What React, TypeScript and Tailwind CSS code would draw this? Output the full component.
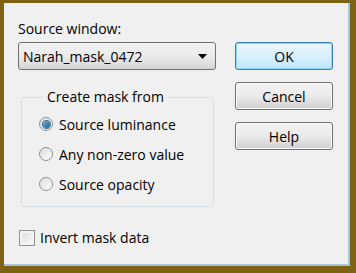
import React from 'react';

const font = { fontFamily: '"Open Sans", "Noto Sans", Arial, sans-serif' };

function Radio({ checked, label }: { checked?: boolean; label: string }) {
  return (
    <div className="flex items-center gap-[6px] h-[30px]">
      <div className="w-[14px] h-[14px] rounded-full border border-[#8e8f8f] bg-gradient-to-br from-[#dcdcdc] to-[#ffffff] flex items-center justify-center">
        {checked && <div className="w-[7px] h-[7px] rounded-full bg-gradient-to-br from-[#6fb3d9] to-[#1c5b8b] ring-1 ring-[#3a6f98]" />}
      </div>
      <span>{label}</span>
    </div>
  );
}

function Btn({ children, primary }: { children: React.ReactNode; primary?: boolean }) {
  return (
    <button
      className={
        primary
          ? 'h-[28px] w-[98px] rounded-[3px] border border-[#3c7fb1] bg-gradient-to-b from-[#eaf6fd] via-[#d9f0fc] to-[#bee6fd] shadow-[inset_0_0_0_1px_#8fd3f5] text-[14px]'
          : 'h-[28px] w-[98px] rounded-[3px] border border-[#707070] bg-gradient-to-b from-[#f2f2f2] via-[#ebebeb] to-[#cfcfcf] shadow-[inset_0_0_0_1px_#fcfcfc] text-[14px]'
      }
    >
      {children}
    </button>
  );
}

export default function App() {
  return (
    <div className="w-[356px] h-[273px] bg-[#7e6314] pt-[3px] pl-[4px] pr-[6px] pb-[7px]" style={font}>
      <div className="h-full w-full bg-[#f0f0f0] border-r-2 border-b-2 border-[#a7c3d8] flex text-[14px] text-black">
        <div className="w-[212px] pl-[14px] pt-[16px] flex flex-col">
          <div className="h-[23px] leading-[20px]">Source window:</div>
          <div className="h-[28px] rounded-[3px] border border-[#707070] bg-gradient-to-b from-[#f2f2f2] via-[#ebebeb] to-[#d5d5d5] flex items-center justify-between pl-[4px] pr-[8px]">
            <span>Narah_mask_0472</span>
            <svg width="9" height="5" viewBox="0 0 9 5"><path d="M0 0h9L4.5 5z" fill="#000" /></svg>
          </div>
          <fieldset className="mt-[18px] ml-[3px] mr-[2px] h-[119px] border border-[#d5dfe5] rounded-[3px] pl-[17px] pt-[3px]">
            <legend className="ml-[5px] px-[3px] leading-[18px]">Create mask from</legend>
            <Radio checked label="Source luminance" />
            <Radio label="Any non-zero value" />
            <Radio label="Source opacity" />
          </fieldset>
          <div className="mt-[20px] ml-[1px] flex items-center gap-[5px]">
            <div className="w-[16px] h-[16px] border border-[#8e8f8f] bg-gradient-to-br from-[#dcdcdc] to-[#fafafa] shadow-[inset_0_0_0_2px_#f4f4f4]" />
            <span>Invert mask data</span>
          </div>
        </div>
        <div className="ml-[19px] pt-[39px] flex flex-col gap-[12px]">
          <Btn primary>OK</Btn>
          <Btn>Cancel</Btn>
          <Btn>Help</Btn>
        </div>
      </div>
    </div>
  );
}
